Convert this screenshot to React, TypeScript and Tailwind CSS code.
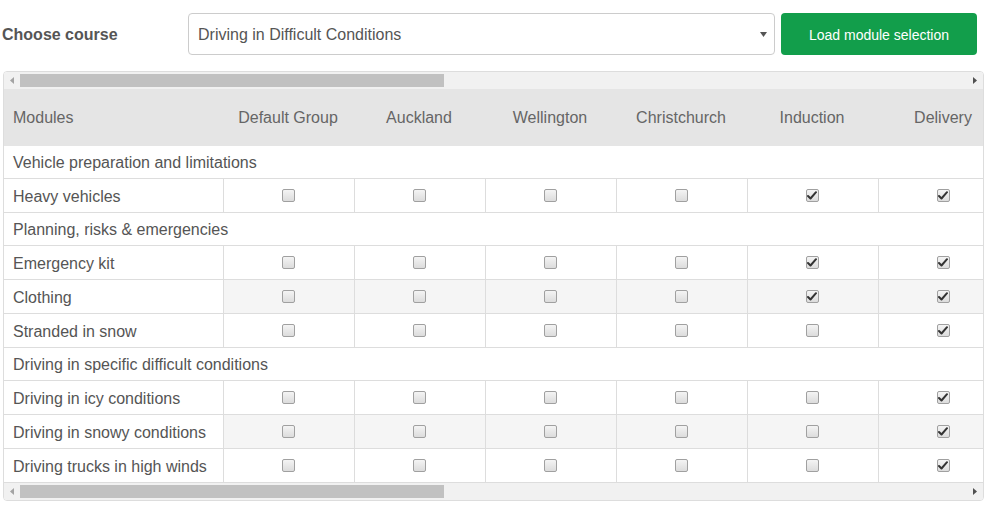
import React from "react";

const cols = ["Default Group", "Auckland", "Wellington", "Christchurch", "Induction", "Delivery"];

type Row =
  | { kind: "group"; label: string }
  | { kind: "item"; label: string; checks: boolean[]; striped?: boolean };

const rows: Row[] = [
  { kind: "group", label: "Vehicle preparation and limitations" },
  { kind: "item", label: "Heavy vehicles", checks: [false, false, false, false, true, true] },
  { kind: "group", label: "Planning, risks & emergencies" },
  { kind: "item", label: "Emergency kit", checks: [false, false, false, false, true, true] },
  { kind: "item", label: "Clothing", checks: [false, false, false, false, true, true], striped: true },
  { kind: "item", label: "Stranded in snow", checks: [false, false, false, false, false, true] },
  { kind: "group", label: "Driving in specific difficult conditions" },
  { kind: "item", label: "Driving in icy conditions", checks: [false, false, false, false, false, true] },
  { kind: "item", label: "Driving in snowy conditions", checks: [false, false, false, false, false, true], striped: true },
  { kind: "item", label: "Driving trucks in high winds", checks: [false, false, false, false, false, true] },
];

function Checkbox({ checked }: { checked: boolean }) {
  return (
    <span className="relative flex h-[13px] w-[13px] items-center justify-center rounded-[2px] border border-[#a0a0a0] bg-gradient-to-b from-[#f4f4f4] to-[#dcdcdc]">
      {checked && (
        <svg width="10" height="9" viewBox="0 0 10 9" className="block">
          <path d="M1 5 L3.5 7.5 L9 1.2" fill="none" stroke="#333" strokeWidth="2" strokeLinecap="round" strokeLinejoin="round" />
        </svg>
      )}
    </span>
  );
}

function ScrollBar() {
  return (
    <div className="flex h-[17px] w-full shrink-0 items-center bg-[#f1f1f1]">
      <div className="flex h-full w-[16px] items-center justify-center">
        <svg width="4" height="7" viewBox="0 0 4 7">
          <path d="M4 0 L0 3.5 L4 7 Z" fill="#a3a3a3" />
        </svg>
      </div>
      <div className="h-[13px] w-[424px] bg-[#c1c1c1]" />
      <div className="flex-1" />
      <div className="flex h-full w-[16px] items-center justify-center">
        <svg width="4" height="7" viewBox="0 0 4 7">
          <path d="M0 0 L4 3.5 L0 7 Z" fill="#505050" />
        </svg>
      </div>
    </div>
  );
}

export default function App() {
  return (
    <div className="h-[505px] w-[986px] bg-white font-['Liberation_Sans',Arial,sans-serif] text-[#555]">
      <div className="flex items-center pt-[13px]">
        <div className="w-[188px] pl-[2px] pt-[2px] text-[16px] font-bold text-[#555]">Choose course</div>
        <div className="flex h-[42px] w-[587px] items-center justify-between rounded-[4px] border border-[#ccc] bg-white pl-[9px] pr-[7px]">
          <span className="pt-[2px] text-[16px] text-[#555]">Driving in Difficult Conditions</span>
          <svg width="7" height="5" viewBox="0 0 7 5">
            <path d="M0 0 L7 0 L3.5 5 Z" fill="#555" />
          </svg>
        </div>
        <button className="ml-[6px] flex h-[42px] w-[196px] items-center justify-center rounded-[4px] bg-[#129e4b] pt-[2px] text-[14px] text-white">
          Load module selection
        </button>
      </div>

      <div className="ml-[3px] mt-[16px] flex w-[981px] flex-col overflow-hidden rounded-[4px] border border-[#ddd]">
        <ScrollBar />
        <div className="flex w-full flex-col overflow-hidden">
          <div className="flex h-[57px] w-[1006px] shrink-0 items-center bg-[#e5e5e5] text-[16px] text-[#666]">
            <div className="w-[220px] pl-[9px]">Modules</div>
            {cols.map((c) => (
              <div key={c} className="w-[131px] pr-[3px] text-center">
                {c}
              </div>
            ))}
          </div>
          {rows.map((r, i) =>
            r.kind === "group" ? (
              <div key={i} className="flex h-[33px] w-[1006px] shrink-0 items-center border-b border-[#ddd] bg-white pl-[9px] pt-[2px] text-[16px]">
                {r.label}
              </div>
            ) : (
              <div key={i} className="flex h-[34px] w-[1006px] shrink-0 border-b border-[#ddd] text-[16px]">
                <div className="flex w-[220px] items-center border-r border-[#ddd] bg-white pl-[9px] pt-[2px]">{r.label}</div>
                {r.checks.map((c, j) => (
                  <div
                    key={j}
                    className={`flex w-[131px] items-center justify-center border-r border-[#ddd] pr-[2px] ${r.striped ? "bg-[#f5f5f5]" : "bg-white"}`}
                  >
                    <Checkbox checked={c} />
                  </div>
                ))}
              </div>
            )
          )}
        </div>
        <ScrollBar />
      </div>
    </div>
  );
}
